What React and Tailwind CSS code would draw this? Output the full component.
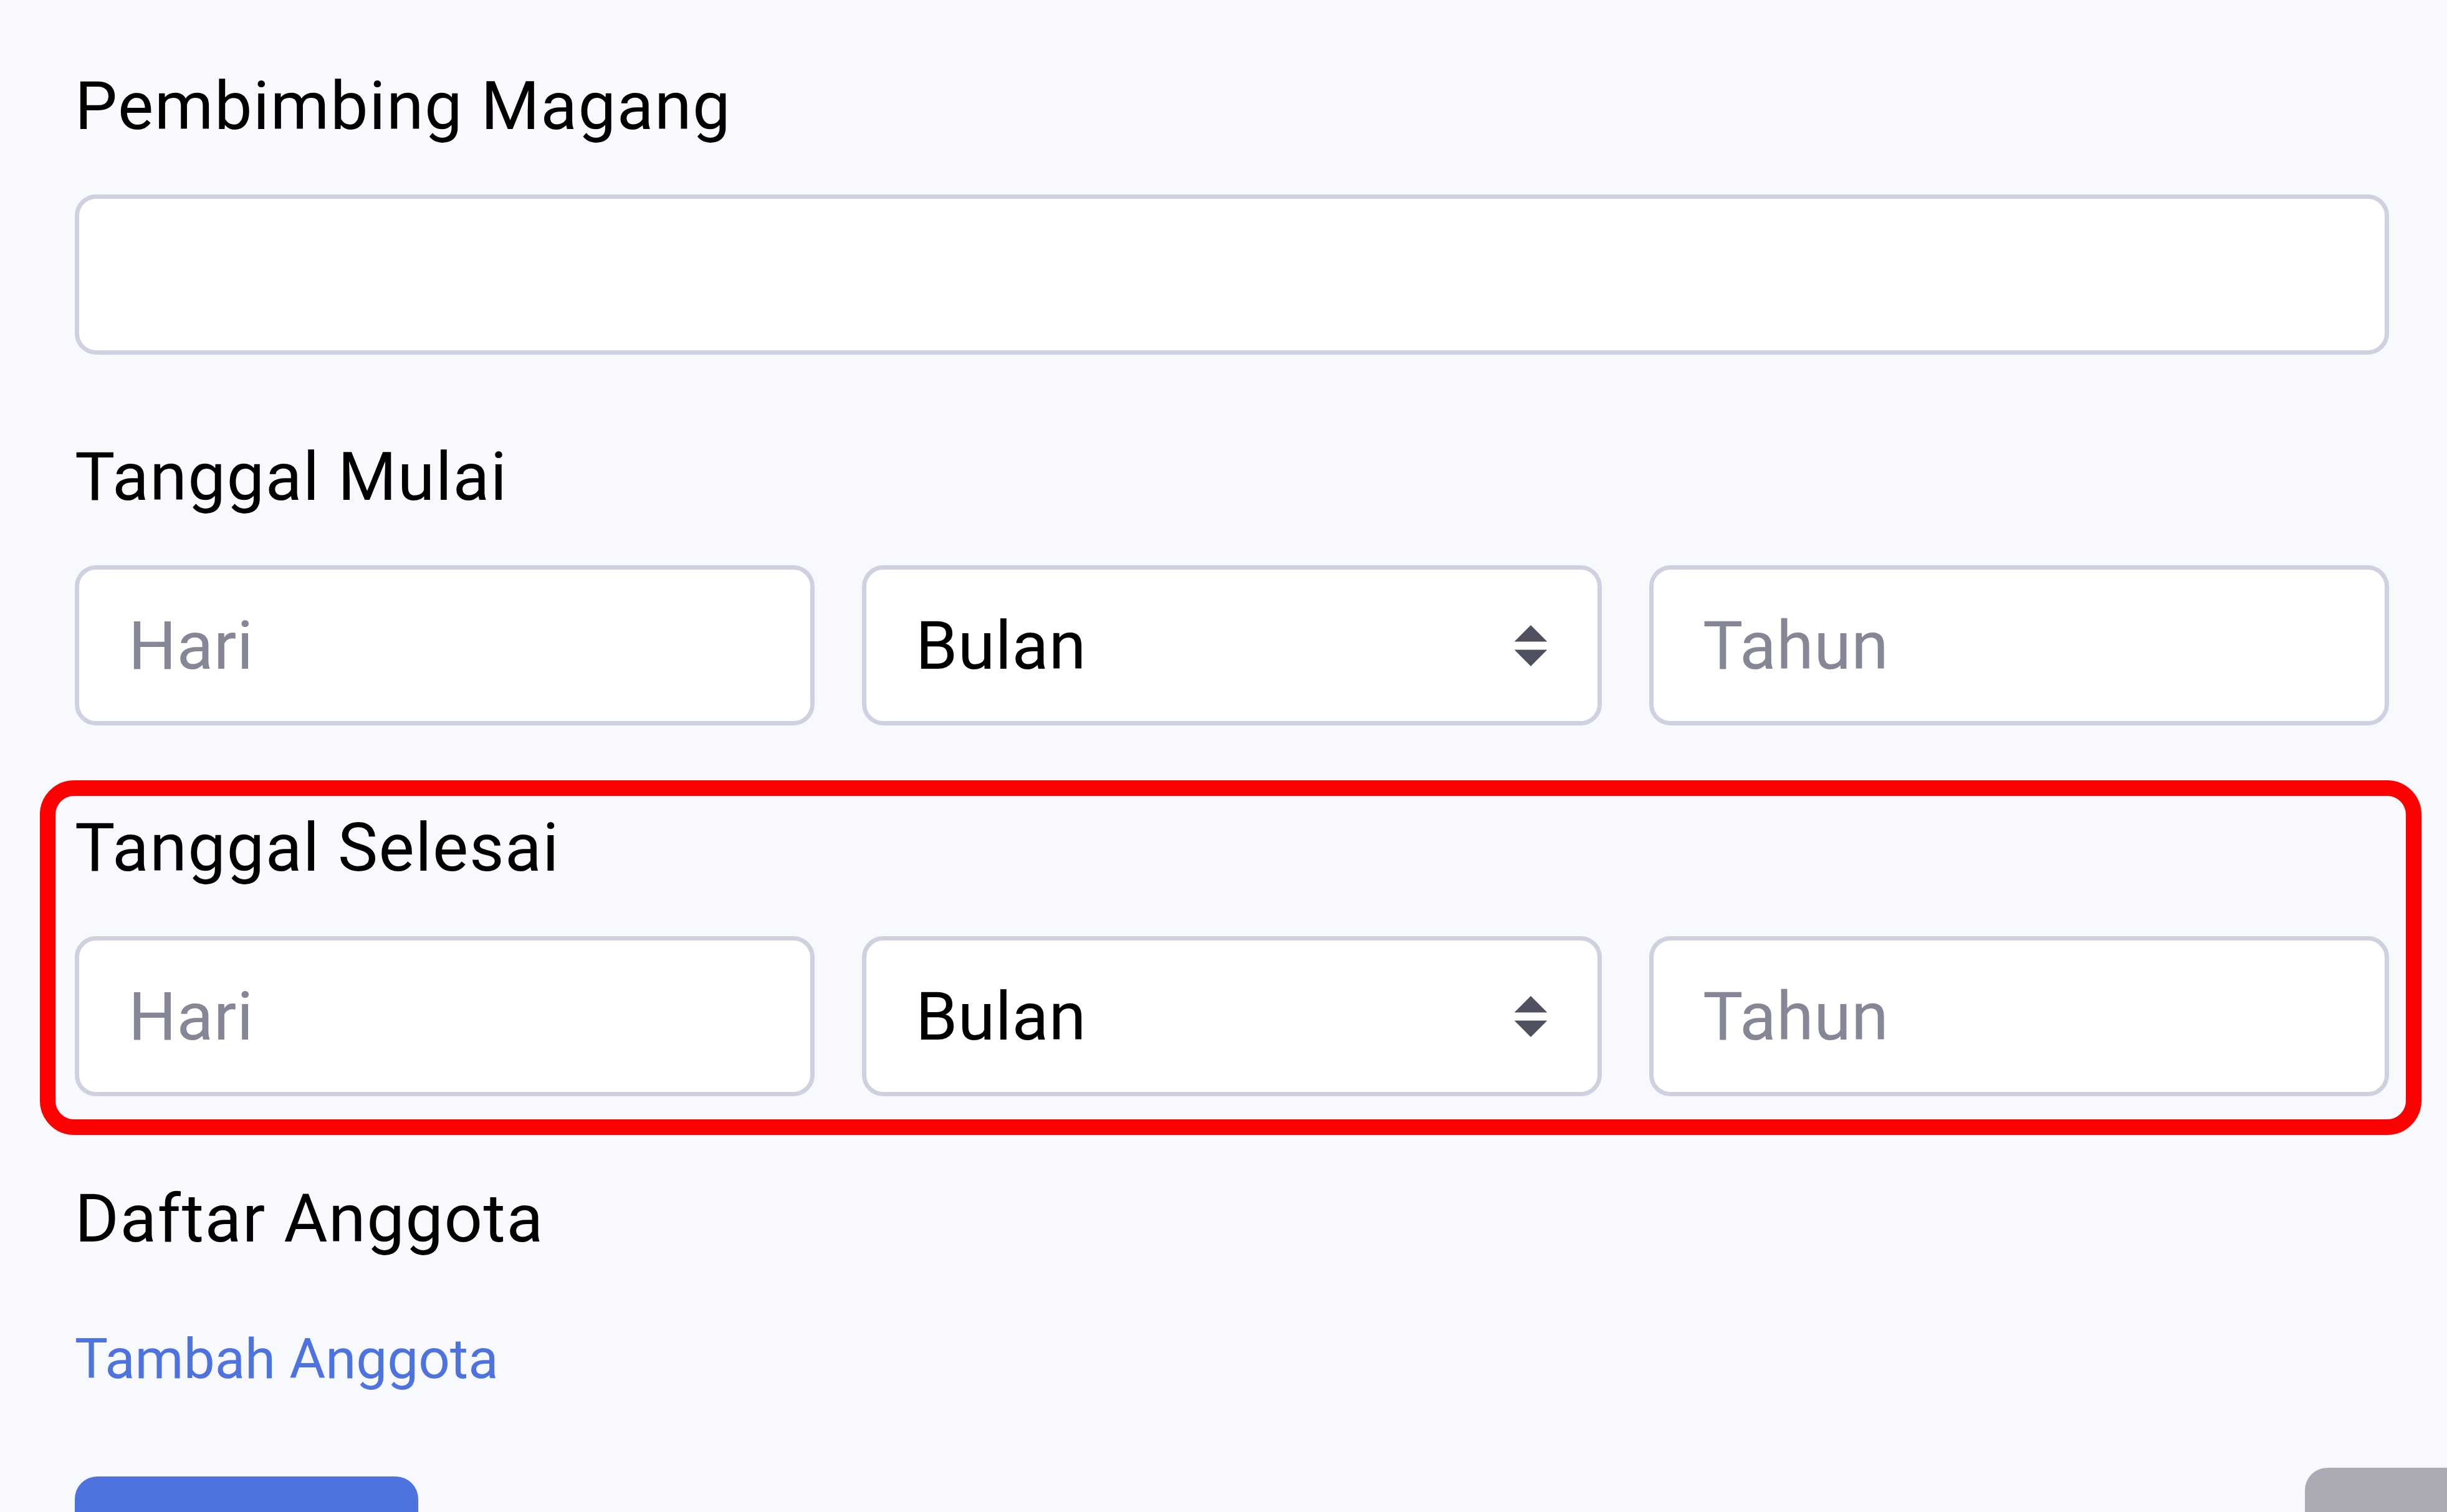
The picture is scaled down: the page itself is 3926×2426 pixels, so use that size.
import React from "react";

const inputCls =
  "block w-full h-[257px] rounded-[34px] border-[7px] border-[#cfd1e0] bg-white px-[79px] text-[108px] tracking-[0.5px] text-black placeholder:text-[#858796] outline-none";

const bulanList = [
  "Januari",
  "Februari",
  "Maret",
  "April",
  "Mei",
  "Juni",
  "Juli",
  "Agustus",
  "September",
  "Oktober",
  "November",
  "Desember",
];

const Field = ({ label, children, highlight }) => {
  return (
    <div className="relative mb-[115px]">
      <label className="block text-[108px] leading-[162px] tracking-[1.5px] text-black mb-[61px]">
        {label}
      </label>
      {children}
      {highlight && (
        <div className="pointer-events-none absolute -left-[56px] -right-[52px] -top-[27px] -bottom-[62px] rounded-[55px] border-[25px] border-[#ff0000]"></div>
      )}
    </div>
  );
};

const DateRow = () => {
  return (
    <div className="grid grid-cols-3 gap-x-[76px]">
      <input type="text" placeholder="Hari" className={inputCls} />
      <div className="relative">
        <select defaultValue="" className={`${inputCls} appearance-none`}>
          <option value="">Bulan</option>
          {bulanList.map((b, i) => (
            <option key={b} value={i + 1}>
              {b}
            </option>
          ))}
        </select>
        {/* panah atas-bawah seperti custom-select bootstrap */}
        <svg
          viewBox="0 0 4 5"
          fill="#4f5160"
          className="pointer-events-none absolute right-[87px] top-1/2 h-[66px] w-[54px] -translate-y-1/2"
        >
          <path d="M2 0L0 2h4zm0 5L0 3h4z" />
        </svg>
      </div>
      <input type="text" placeholder="Tahun" className={inputCls} />
    </div>
  );
};

const App = () => {
  return (
    <div className="h-[2426px] w-[3926px] overflow-hidden bg-[#f8f9fc] pl-[120px] pr-[93px] pt-[89px] font-['Roboto',sans-serif]">
      <Field label="Pembimbing Magang">
        <input type="text" className={inputCls} />
      </Field>

      <Field label="Tanggal Mulai">
        <DateRow />
      </Field>

      <Field label="Tanggal Selesai" highlight>
        <DateRow />
      </Field>

      <div>
        <div className="text-[108px] leading-[162px] tracking-[1.5px] text-black">Daftar Anggota</div>
        <a href="#" className="mt-[78px] block text-[89px] leading-[133px] text-[#4e73df]">
          Tambah Anggota
        </a>
      </div>

      <div className="mt-[108px] flex items-start justify-between">
        <button aria-label="Simpan" className="mt-[14px] h-[257px] w-[551px] shrink-0 rounded-[36px] bg-[#4e73df]"></button>
        <button aria-label="Batal" className="-mr-[425px] h-[257px] w-[560px] shrink-0 rounded-[36px] bg-[#aaabb5]"></button>
      </div>
    </div>
  );
};

export default App;
